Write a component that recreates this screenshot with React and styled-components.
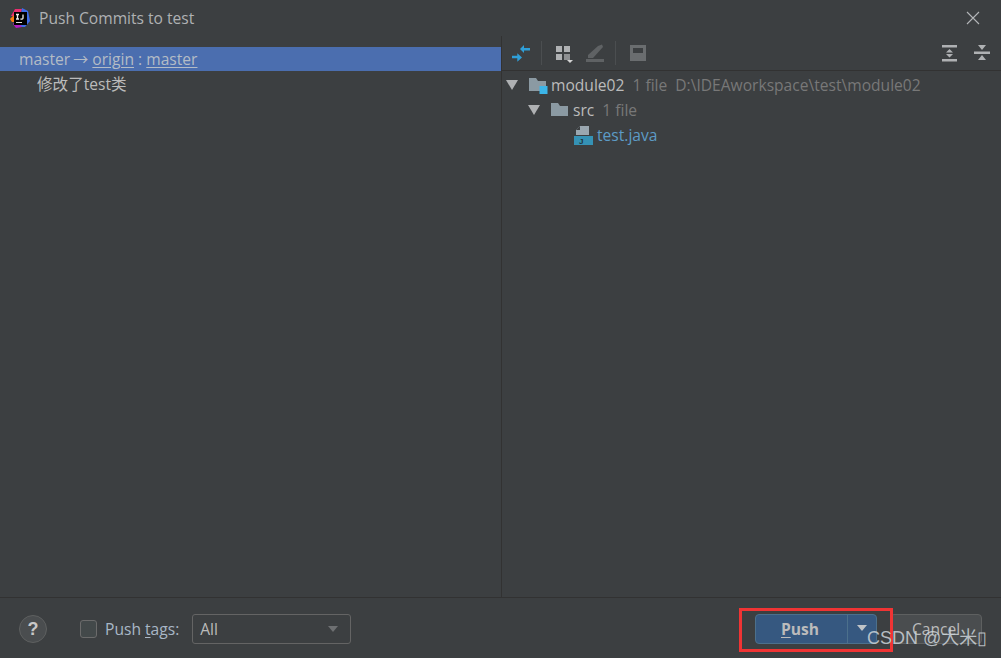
import styled, { createGlobalStyle } from "styled-components"

const GlobalStyle = createGlobalStyle`
  html, body {
    margin: 0;
    padding: 0;
    background: #3c3f41;
    overflow: hidden;
  }
`

const Dialog = styled.div`
  position: relative;
  width: 1001px;
  height: 658px;
  display: flex;
  flex-direction: column;
  overflow: hidden;
  background: #3c3f41;
  color: #bbbbbb;
  font-family: "Open Sans", "Noto Sans CJK SC", sans-serif;
  font-size: 15.6px;
`

const TitleBar = styled.div`
  height: 36px;
  flex: none;
  display: flex;
  align-items: center;
  padding: 0 21px 0 10px;
`

const Title = styled.div`
  margin-left: 9px;
  color: #afb1b3;
  flex: 1;
`

const CloseIcon = styled.svg`
  width: 14px;
  height: 14px;
  display: block;
`

const Split = styled.div`
  flex: 1;
  display: flex;
  min-height: 0;
  border-bottom: 1px solid #323232;
`

const LeftPane = styled.div`
  width: 501px;
  flex: none;
  padding-top: 11px;
  border-right: 1px solid #323232;
`

const BranchRow = styled.div`
  height: 24px;
  line-height: 24px;
  padding-left: 19px;
  background: #4b6eaf;
  color: #b4bcc6;
  white-space: pre;
`

const BranchArrow = styled.span`
  font-family: "Noto Sans CJK SC", sans-serif;
  font-size: 15px;
  margin-left: -1px;
`

const BranchLink = styled.span`
  text-decoration: underline;
  text-underline-offset: 2px;
`

const CommitRow = styled.div`
  height: 24px;
  display: flex;
  align-items: center;
  padding-left: 37px;
  color: #bbbbbb;
`

const RightPane = styled.div`
  flex: 1;
  display: flex;
  flex-direction: column;
`

const Toolbar = styled.div`
  height: 34px;
  flex: none;
  display: flex;
  align-items: center;
  padding: 0 9px;
  border-bottom: 1px solid #323232;
`

const ToolIcon = styled.svg`
  width: 20px;
  height: 20px;
  display: block;
  margin-right: ${(props) => props.$gap || 0}px;
`

const ToolSeparator = styled.div`
  width: 1px;
  height: 24px;
  background: #4b4e50;
  margin-right: ${(props) => props.$gap || 0}px;
`

const ToolSpacer = styled.div`
  flex: 1;
`

const Tree = styled.div`
  padding-top: 1px;
`

const TreeRow = styled.div`
  height: 25px;
  display: flex;
  align-items: center;
  padding-left: ${(props) => props.$indent}px;
  white-space: pre;
`

const Arrow = styled.div`
  width: 0;
  height: 0;
  border-left: 6px solid transparent;
  border-right: 6px solid transparent;
  border-top: 10px solid #afb1b3;
  margin-right: ${(props) => props.$gap}px;
`

const NodeName = styled.span`
  margin-left: 3px;
  color: ${(props) => props.$color || "#bbbbbb"};
`

const Hint = styled.span`
  margin-left: 8px;
  color: #787878;
`

const Footer = styled.div`
  height: 60px;
  box-sizing: border-box;
  flex: none;
  display: flex;
  align-items: flex-start;
  padding: 16px 19px 0 19px;
`

const HelpButton = styled.div`
  width: 28px;
  height: 28px;
  box-sizing: border-box;
  border-radius: 50%;
  background: #4a4d4f;
  border: 1px solid #5e6060;
  color: #c8c8c8;
  font-family: "Liberation Sans", sans-serif;
  font-size: 18px;
  font-weight: 700;
  display: flex;
  align-items: center;
  justify-content: center;
  margin-top: 1px;
`

const TagsGroup = styled.div`
  height: 30px;
  display: flex;
  align-items: center;
  margin-left: 33px;
`

const Checkbox = styled.div`
  width: 17px;
  height: 18px;
  box-sizing: border-box;
  border: 1px solid #6b6b6b;
  border-radius: 3px;
  background: #43494a;
`

const TagsLabel = styled.label`
  margin-left: 8px;
  color: #a9b7c6;
`

const Mnemonic = styled.span`
  text-decoration: underline;
  text-underline-offset: 2px;
`

const Select = styled.div`
  width: 159px;
  height: 30px;
  box-sizing: border-box;
  margin-left: 13px;
  padding: 0 12px 0 7px;
  display: flex;
  align-items: center;
  justify-content: space-between;
  border: 1px solid #646464;
  border-radius: 3px;
  background: #3c3f41;
  color: #bbbbbb;
`

const SelectCaret = styled.div`
  width: 0;
  height: 0;
  border-left: 5.5px solid transparent;
  border-right: 5.5px solid transparent;
  border-top: 6px solid #6e7072;
`

const Actions = styled.div`
  margin-left: auto;
  display: flex;
  gap: 13px;
`

const PushWrap = styled.div`
  position: relative;
`

const PushButton = styled.div`
  width: 122px;
  height: 30px;
  box-sizing: border-box;
  display: flex;
  border: 1px solid #4c708c;
  border-radius: 4px;
  background: #365880;
  color: #bbbbbb;
  font-weight: 700;
`

const PushLabel = styled.div`
  flex: 1;
  display: flex;
  align-items: center;
  justify-content: center;
  padding-right: 3px;
`

const PushMenu = styled.div`
  width: 28px;
  flex: none;
  display: flex;
  align-items: center;
  justify-content: center;
  border-left: 1px solid #4c708c;
`

const PushCaret = styled.div`
  width: 0;
  height: 0;
  margin-top: -3px;
  border-left: 5.5px solid transparent;
  border-right: 5.5px solid transparent;
  border-top: 6px solid #c0c4c8;
`

const Highlight = styled.div`
  position: absolute;
  left: -16px;
  top: -6px;
  width: 148px;
  height: 38px;
  border: 3px solid #f03434;
  box-sizing: content-box;
  pointer-events: none;
`

const CancelButton = styled.div`
  width: 92px;
  height: 30px;
  box-sizing: border-box;
  display: flex;
  align-items: center;
  justify-content: center;
  border: 1px solid #5e6060;
  border-radius: 4px;
  background: #4a4d4f;
  color: #bbbbbb;
`

const Watermark = styled.div`
  position: absolute;
  left: 867px;
  top: 627px;
  font-family: "Liberation Sans", "Noto Sans CJK SC", sans-serif;
  font-size: 18px;
  line-height: 22px;
  color: rgba(205, 212, 218, 0.85);
  white-space: pre;
`

const ProductLogo = () => (
  <svg width="20" height="20" viewBox="0 0 20 20">
    <path d="M1 8 L5 1 L12 1 L10 8 Z" fill="#ea2d6f" />
    <path d="M0 11 L4 7 L5 14 L2 14 Z" fill="#f97a12" />
    <path d="M12 0 L18 3 L20 13 L15 19 L9 19 Z" fill="#3d6be8" />
    <path d="M3 16 L6 12 L12 19 L6 20 Z" fill="#b21cc4" />
    <rect x="4" y="4" width="13" height="13" fill="#000" />
    <rect x="6" y="14" width="6" height="1" fill="#ddd" />
    <path d="M6 6.5 H9 M7.5 6.5 V11 M6 11 H9 M13 6.5 V10 Q13 11.5 10.5 11" stroke="#eee" strokeWidth="1.3" fill="none" />
  </svg>
)

const Folder = ({ badge }) => (
  <svg width="20" height="18" viewBox="0 0 20 18" style={{ display: "block" }}>
    <path d="M1 2 H8 L10 5 H18 V15 H1 Z" fill="#8b9aa3" />
    {badge && <rect x="11.5" y="10" width="8" height="8" fill="#3cb5e8" />}
  </svg>
)

const JavaFile = () => (
  <svg width="20" height="20" viewBox="0 0 20 20" style={{ display: "block" }}>
    <path d="M6 1 H15 V10 H2 V5 Z" fill="#9aa7b0" />
    <path d="M6 1 V5 H2 Z" fill="#3c3f41" />
    <rect x="0" y="11" width="19" height="9" fill="#3592b5" />
    <text x="5" y="19" fontFamily="Liberation Sans, sans-serif" fontSize="8" fontWeight="700" fill="#20323c">J</text>
  </svg>
)

export default function App() {
  return (
    <Dialog>
      <GlobalStyle />
      <TitleBar>
        <ProductLogo />
        <Title>Push Commits to test</Title>
        <CloseIcon viewBox="0 0 14 14">
          <path d="M1 1 L13 13 M13 1 L1 13" stroke="#b4b6b8" strokeWidth="1.1" />
        </CloseIcon>
      </TitleBar>

      <Split>
        <LeftPane>
          <BranchRow>
            master <BranchArrow>→</BranchArrow> <BranchLink>origin</BranchLink> : <BranchLink>master</BranchLink>
          </BranchRow>
          <CommitRow>修改了test类</CommitRow>
        </LeftPane>

        <RightPane>
          <Toolbar>
            <ToolIcon viewBox="0 0 20 20" $gap={10}>
              <path d="M9 6 L13 2 V5 H19 V7.5 H13 V10 Z" fill="#2f9fd8" />
              <path d="M11 14.5 L6.3 10.3 V12.7 H1 V15.3 H6.3 V18.7 Z" fill="#2f9fd8" />
            </ToolIcon>
            <ToolSeparator $gap={12} />
            <ToolIcon viewBox="0 0 20 20" $gap={11}>
              <rect x="2" y="3" width="6" height="6" fill="#afb1b3" />
              <rect x="10" y="3" width="6" height="6" fill="#afb1b3" />
              <rect x="2" y="11" width="6" height="6" fill="#afb1b3" />
              <rect x="10" y="11" width="6" height="6" fill="#8e9092" />
              <path d="M13 17 H19 L16 20 Z" fill="#d4d4d4" />
            </ToolIcon>
            <ToolIcon viewBox="0 0 20 20" $gap={10}>
              <path d="M3 12 L13 3 L17 1.5 L18 4 L8 15 H3 Z" fill="#5f6264" />
              <rect x="1" y="16" width="18" height="3" fill="#5f6264" />
            </ToolIcon>
            <ToolSeparator $gap={12} />
            <ToolIcon viewBox="0 0 20 20">
              <path d="M2 2 H18 V18 H2 Z M5 5 V10 H15 V5 Z" fill="#6a6d6f" fillRule="evenodd" />
            </ToolIcon>
            <ToolSpacer />
            <ToolIcon viewBox="0 0 20 20" $gap={12}>
              <rect x="2" y="2" width="15" height="2.5" fill="#afb1b3" />
              <path d="M9.5 6 L13 9.5 H6 Z M9.5 14.5 L6 11 H13 Z" fill="#afb1b3" />
              <rect x="2" y="16" width="15" height="2.5" fill="#afb1b3" />
            </ToolIcon>
            <ToolIcon viewBox="0 0 20 20">
              <path d="M6 2 H14 L10 7 Z M10 12 L14 17 H6 Z" fill="#afb1b3" />
              <rect x="2" y="8.5" width="16" height="2.5" fill="#afb1b3" />
            </ToolIcon>
          </Toolbar>
          <Tree>
            <TreeRow $indent={4}>
              <Arrow $gap={10} />
              <Folder badge />
              <NodeName>module02</NodeName>
              <Hint>1 file</Hint>
              <Hint>D:\IDEAworkspace\test\module02</Hint>
            </TreeRow>
            <TreeRow $indent={26}>
              <Arrow $gap={10} />
              <Folder />
              <NodeName>src</NodeName>
              <Hint>1 file</Hint>
            </TreeRow>
            <TreeRow $indent={72}>
              <JavaFile />
              <NodeName $color="#5c9bc6">test.java</NodeName>
            </TreeRow>
          </Tree>
        </RightPane>
      </Split>

      <Footer>
        <HelpButton>?</HelpButton>
        <TagsGroup>
          <Checkbox />
          <TagsLabel>
            Push <Mnemonic>t</Mnemonic>ags:
          </TagsLabel>
          <Select>
            All
            <SelectCaret />
          </Select>
        </TagsGroup>
        <Actions>
          <PushWrap>
            <PushButton>
              <PushLabel>
                <span>
                  <Mnemonic>P</Mnemonic>ush
                </span>
              </PushLabel>
              <PushMenu>
                <PushCaret />
              </PushMenu>
            </PushButton>
            <Highlight />
          </PushWrap>
          <CancelButton>Cancel</CancelButton>
        </Actions>
      </Footer>

      <Watermark>CSDN @大米▯</Watermark>
    </Dialog>
  )
}
